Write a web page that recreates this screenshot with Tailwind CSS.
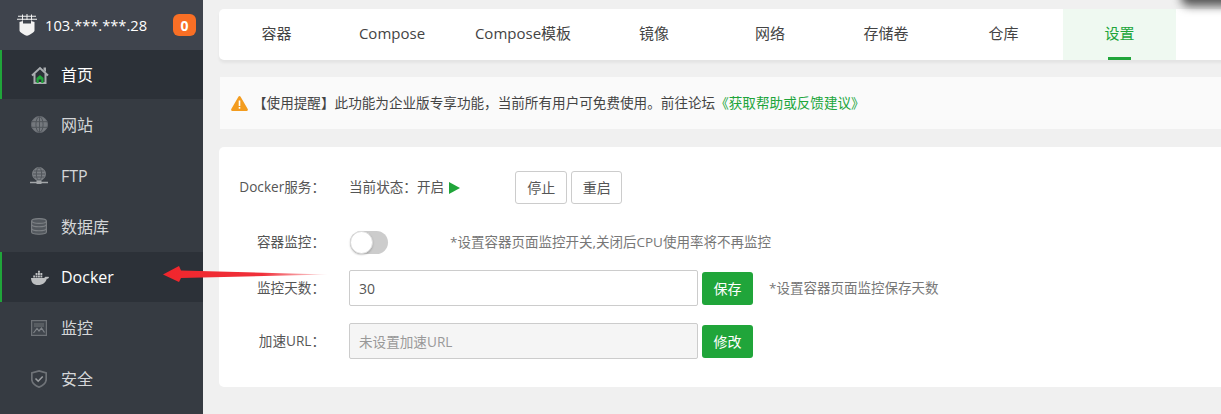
<!DOCTYPE html>
<html lang="zh-CN">
<head>
    <meta charset="UTF-8">
    <title>Docker 设置</title>
    <script src="https://cdn.jsdelivr.net/npm/@tailwindcss/browser@4"></script>
</head>
<body class="h-[414px] w-[1221px] overflow-hidden bg-[#f0f0f0] font-['Open_Sans','Noto_Sans_CJK_SC',sans-serif] text-[#555]">
    <div class="relative flex h-[414px] w-[1221px] overflow-hidden">

        <!-- sidebar -->
        <aside class="h-full w-[203px] shrink-0 bg-[#363b42]">
            <div class="flex h-[50px] items-center bg-[#3f444d] pl-[17px] pr-[7px]">
                <svg class="h-[22px] w-[20px]" viewBox="0 0 20 22" fill="#f2f2f2">
                    <path d="M1 1.800h18v1H1zM0 4.800h20v1H0z"/>
                    <path d="M5 .5h1v6H5zM9.500 0h1v6h-1zM14 .5h1v6h-1z"/>
                    <path d="M2.500 8 6 7v2.500h8V7l3.500 1v8.500c0 1.800-5 4.700-7.500 5.300-2.500-.6-7.500-3.500-7.500-5.300z"/>
                </svg>
                <span class="ml-[8px] text-[14.7px] text-white">103.***.***.28</span>
                <span class="ml-auto flex h-[22px] w-[23px] items-center justify-center rounded-[6px] bg-[#f96f25] text-[14px] font-bold text-white">0</span>
            </div>

            <a class="flex h-[49px] items-center border-l-2 border-[#20a53a] bg-[#2c3138] pl-[29px] text-[16px] text-white">
                <svg class="h-[18px] w-[18px]" viewBox="0 0 18 18">
                    <path fill="none" stroke="#a9adb0" stroke-width="2" d="M1 9.500 9 2l8 7.500M3.500 8v9h11V8"/>
                    <path fill="#a9adb0" d="M12.500 1.500H15v4.500l-2.500-2z"/>
                    <path fill="#20a53a" d="M5.500 17v-5l3.500-3 3.500 3v5h-2.200v-3.500H7.700V17z"/>
                </svg>
                <span class="ml-[12px]">首页</span>
            </a>
            <a class="flex h-[51px] items-center pl-[31px] text-[16px] text-[#d4d6d8]">
                <svg class="h-[17px] w-[17px]" viewBox="0 0 17 17" fill="none" stroke="#50555b" stroke-width="1">
                    <circle cx="8.500" cy="8.500" r="8" fill="#74787d" stroke="#6a6e74"/>
                    <ellipse cx="8.500" cy="8.500" rx="3.600" ry="7.800"/>
                    <path d="M8.500.7v15.600M1 5.700h15M1 11.300h15"/>
                </svg>
                <span class="ml-[13px]">网站</span>
            </a>
            <a class="flex h-[51px] items-center pl-[30px] text-[16px] text-[#d4d6d8]">
                <svg class="h-[17px] w-[18px]" viewBox="0 0 18 17" fill="none" stroke="#50555b" stroke-width="1">
                    <circle cx="9" cy="7" r="6.500" fill="#7c8085" stroke="#74787d"/>
                    <ellipse cx="9" cy="7" rx="2.700" ry="6.300"/>
                    <path d="M3 7h12M4 4h10M4 10h10"/>
                    <path stroke="#a2a5a8" stroke-width="1.500" d="M0 15.500h18"/>
                    <rect x="6.500" y="13.500" width="5" height="3.500" fill="#a2a5a8" stroke="none"/>
                </svg>
                <span class="ml-[13px]">FTP</span>
            </a>
            <a class="flex h-[51px] items-center pl-[31px] text-[16px] text-[#d4d6d8]">
                <svg class="h-[17px] w-[16px]" viewBox="0 0 16 17" fill="#53585e" stroke="#7d8185" stroke-width="1.100">
                    <path d="M.6 3v11c0 3 14.800 3 14.800 0V3"/>
                    <ellipse cx="8" cy="3" rx="7.400" ry="2.400"/>
                    <path fill="none" d="M.6 6.800c1 2.600 13.800 2.600 14.800 0M.6 10.800c1 2.600 13.800 2.600 14.800 0"/>
                </svg>
                <span class="ml-[14px]">数据库</span>
            </a>
            <a class="flex h-[50px] items-center border-l-2 border-[#20a53a] bg-[#2c3138] pl-[29px] text-[16px] text-white">
                <svg class="h-[16px] w-[18px]" viewBox="0 0 18 16" fill="#bdbfc1">
                    <path d="M0 9h13.300c.4-1 1.700-1.600 2.700-1 .6-.4 1.300-.4 2 .2-.4 1-1.200 1.500-2.200 1.500C14.800 13 12 16 7 16 2.500 16 .2 13.500 0 9z"/>
                    <path d="M2.200 6.500H4v2H2.200zM4.600 6.500h1.900v2H4.600zM7 6.500h1.900v2H7zM9.400 6.500h1.900v2H9.400zM4.600 4.100h1.900v2H4.600zM7 4.100h1.900v2H7zM9.400 4.100h1.900v2H9.400zM7 1.700h1.900v2H7z"/>
                </svg>
                <span class="ml-[12px]">Docker</span>
            </a>
            <a class="flex h-[51px] items-center pl-[31px] text-[16px] text-[#d4d6d8]">
                <svg class="h-[16px] w-[16px]" viewBox="0 0 16 16" fill="none" stroke="#6f7378" stroke-width="1.200">
                    <rect x=".6" y=".6" width="14.800" height="14.800" fill="#41464d"/>
                    <path fill="#6f7378" stroke="none" d="M3 3h10v4H3z" opacity=".5"/>
                    <path stroke="#7f8388" d="M2.500 13 6 8.500l2 2.500 2.500-3 3 4.500"/>
                </svg>
                <span class="ml-[14px]">监控</span>
            </a>
            <a class="flex h-[51px] items-center pl-[31px] text-[16px] text-[#d4d6d8]">
                <svg class="h-[18px] w-[16px]" viewBox="0 0 16 18" fill="none" stroke="#6f7378" stroke-width="1.700">
                    <path d="M8 .9 15.200 3v6.500c0 3.700-4.300 6.700-7.200 7.600C5.100 16.200.8 13.200.8 9.500V3z"/>
                    <path stroke="#9a9da0" stroke-width="1.600" d="m4.500 8.500 2.700 2.700 4.500-4.700"/>
                </svg>
                <span class="ml-[14px]">安全</span>
            </a>
        </aside>

        <!-- main -->
        <main class="min-w-0 flex-1 pl-[16px] pt-[9px]">
            <nav class="flex h-[51px] w-[1100px] rounded-l-[5px] bg-white text-[15px] text-[#444] shadow-[0_3px_3px_rgba(0,0,0,0.05)]">
                <a class="flex h-full w-[115px] items-center justify-center pb-[2px]">容器</a>
                <a class="flex h-full w-[116px] items-center justify-center pb-[2px]">Compose</a>
                <a class="flex h-full w-[146px] items-center justify-center pb-[2px]">Compose模板</a>
                <a class="flex h-full w-[116px] items-center justify-center pb-[2px]">镜像</a>
                <a class="flex h-full w-[116px] items-center justify-center pb-[2px]">网络</a>
                <a class="flex h-full w-[116px] items-center justify-center pb-[2px]">存储卷</a>
                <a class="flex h-full w-[119px] items-center justify-center pb-[2px]">仓库</a>
                <a class="relative flex h-full w-[113px] items-center justify-center bg-[#eff9f1] pb-[2px] text-[#20a53a]">
                    设置
                    <span class="absolute bottom-0 left-[45px] h-[3px] w-[23px] bg-[#20a53a]"></span>
                </a>
            </nav>

            <div class="ml-px mt-[17px] flex h-[52px] w-[1100px] items-center bg-[#fafafa] pl-[11px] text-[13.6px] text-[#444]">
                <svg class="h-[15px] w-[17px]" viewBox="0 0 17 15">
                    <path fill="#f39c1f" d="M7.400.7c.5-.9 1.700-.9 2.200 0l7.100 12.400c.5.9-.1 1.900-1.100 1.900H1.400C.4 15-.2 14 .3 13.100z"/>
                    <rect x="7.700" y="4.500" width="1.600" height="5.500" fill="#fff"/>
                    <rect x="7.700" y="11" width="1.600" height="1.700" fill="#fff"/>
                </svg>
                <span class="ml-[5px]">【使用提醒】此功能为企业版专享功能，当前所有用户可免费使用。前往论坛<a class="text-[#20a53a]">《获取帮助或反馈建议》</a></span>
            </div>

            <section class="mt-[18px] h-[240px] w-[1100px] rounded-[5px] bg-white pt-[24px] text-[13.6px]">
                <div class="flex h-[33px] items-center">
                    <label class="w-[106px] text-right text-[#555]">Docker服务：</label>
                    <span class="ml-[24px] text-[13.6px] text-[#555]">当前状态：开启</span>
                    <svg class="ml-[5px] h-[12px] w-[11px]" viewBox="0 0 11 12"><path fill="#20a53a" d="M0 0l11 6-11 6z"/></svg>
                    <button class="ml-[55px] h-[33px] w-[52px] rounded-[3px] border border-[#ccc] bg-white text-[14px] text-[#555]">停止</button>
                    <button class="ml-[4px] h-[33px] w-[51px] rounded-[3px] border border-[#ccc] bg-white text-[14px] text-[#555]">重启</button>
                </div>

                <div class="mt-[20px] flex h-[36px] items-center">
                    <label class="w-[106px] text-right text-[#555]">容器监控：</label>
                    <span class="relative ml-[25px] h-[23px] w-[38px] rounded-full bg-[#ccc]">
                        <span class="absolute left-0 top-0 h-[23px] w-[23px] rounded-full border border-[#ddd] bg-white shadow-[0_1px_2px_rgba(0,0,0,0.2)]"></span>
                    </span>
                    <span class="ml-[62px] text-[13.5px] text-[#777]">*设置容器页面监控开关,关闭后CPU使用率将不再监控</span>
                </div>

                <div class="mt-[10px] flex h-[36px] items-center">
                    <label class="w-[106px] text-right text-[#555]">监控天数：</label>
                    <input class="ml-[24px] h-[36px] w-[349px] rounded-[2px] border border-[#ccc] bg-white pl-[9px] text-[14px] text-[#555]" value="30">
                    <button class="ml-[4px] h-[33px] w-[51px] rounded-[3px] bg-[#20a53a] text-[14px] text-white">保存</button>
                    <span class="ml-[16px] text-[13.5px] text-[#777]">*设置容器页面监控保存天数</span>
                </div>

                <div class="mt-[17px] flex h-[36px] items-center">
                    <label class="w-[106px] text-right text-[#555]">加速URL：</label>
                    <input class="ml-[24px] h-[36px] w-[349px] rounded-[2px] border border-[#ccc] bg-[#f5f5f5] pl-[9px] text-[13.6px] placeholder:text-[#999]" placeholder="未设置加速URL" disabled>
                    <button class="ml-[4px] h-[33px] w-[51px] rounded-[3px] bg-[#20a53a] text-[14px] text-white">修改</button>
                </div>
            </section>
        </main>

        <!-- annotation arrow over the page -->
        <svg class="absolute left-[160px] top-[262px] h-[24px] w-[172px]" viewBox="0 0 172 24">
            <defs>
                <linearGradient id="arrowFill" x1="0" x2="1" y1="0" y2="0">
                    <stop offset="0" stop-color="#f0262c"/>
                    <stop offset="0.6" stop-color="#f0303a"/>
                    <stop offset="1" stop-color="#f0303a" stop-opacity="0.1"/>
                </linearGradient>
            </defs>
            <path fill="url(#arrowFill)" d="M3 12.500 19 4l2 4.500 147 4-147 3.500-2 4z"/>
        </svg>

        <!-- blurred window edge in the corner -->
        <div class="absolute -right-[20px] -top-[14px] h-[20px] w-[60px] rounded-[8px] bg-[#555] blur-[5px]"></div>
    </div>
</body>
</html>
